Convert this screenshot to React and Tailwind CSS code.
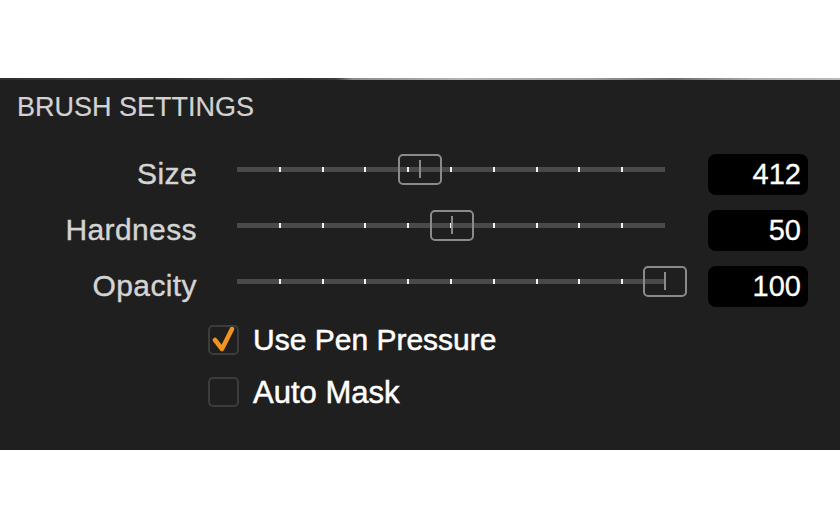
import React from "react";

const TRACK_W = 428;

function Slider({ frac }) {
  const ticks = [1, 2, 3, 4, 5, 6, 7, 8, 9];
  const thumbX = frac * TRACK_W;
  return (
    <div className="relative w-[428px] h-[31px] mb-[10px]">
      <div className="absolute left-0 right-0 top-[13px] h-[5px] bg-[#4a4a4a]" />
      {ticks.map((k) => (
        <div
          key={k}
          className="absolute top-[13px] h-[5px] w-[2px] bg-[#f2f2f2]"
          style={{ left: `${(k * TRACK_W) / 10 - 1}px` }}
        />
      ))}
      <div
        className="absolute top-0 h-[31px] w-[44px] rounded-[5px] border-2 border-[#8a8a8a] flex items-center justify-center"
        style={{ left: `${thumbX - 22}px` }}
      >
        <div className="w-[2px] h-[18px] bg-[#8a8a8a]" />
      </div>
    </div>
  );
}

function Row({ label, frac, value }) {
  return (
    <div className="flex items-center h-[56px]">
      <div className="w-[197px] text-right text-[30px] leading-none tracking-[0.4px] text-[#d4d4d4] [-webkit-text-stroke:0.4px_#d4d4d4]">
        {label}
      </div>
      <div className="ml-[40px]">
        <Slider frac={frac} />
      </div>
      <div className="ml-[43px] w-[100px] h-[41px] rounded-[8px] bg-black flex items-center justify-end pr-[7px] text-[29px] leading-none text-white [-webkit-text-stroke:0.3px_#ffffff]">
        {value}
      </div>
    </div>
  );
}

function Check({ checked, label, size }) {
  return (
    <div className="flex items-center h-[52px] pl-[208px]">
      <div className="w-[31px] h-[30px] rounded-[5px] border-2 border-[#3c3c3c] flex items-center justify-center">
        {checked && (
          <svg width="24" height="26" viewBox="0 0 24 26">
            <polyline
              points="3,13 10,22 20,2"
              fill="none"
              stroke="#f0941f"
              strokeWidth="4.5"
              strokeLinecap="round"
              strokeLinejoin="round"
            />
          </svg>
        )}
      </div>
      <div
        className={
          size === "lg"
            ? "ml-[14px] text-[31px] leading-none text-white [-webkit-text-stroke:0.5px_#ffffff]"
            : "ml-[14px] text-[30px] leading-none text-white [-webkit-text-stroke:0.5px_#ffffff]"
        }
      >
        {label}
      </div>
    </div>
  );
}

export default function App() {
  return (
    <div
      className="w-[840px] h-[530px] bg-white pt-[78px]"
      style={{ fontFamily: '"Liberation Sans", Arial, sans-serif' }}
    >
      <div className="h-[372px] bg-[#1f1f1f]">
        <div className="h-[2px] bg-[linear-gradient(90deg,#2a2e33_0%,#3a3d42_10%,#2c2f33_20%,#4a4c50_28%,#2a2d31_35%,#3a3c40_40%,#8a8c90_42%,#b0b2b6_55%,#9a9ca0_70%,#6a6c70_80%,#a8aaae_90%,#b8babe_100%)]" />
        <div className="h-[66px] pt-[14px] pl-[17px] text-[27px] leading-none text-[#d2d2d2] [-webkit-text-stroke:0.2px_#d2d2d2]">
          BRUSH SETTINGS
        </div>
        <Row label="Size" frac={0.428} value="412" />
        <Row label="Hardness" frac={0.502} value="50" />
        <Row label="Opacity" frac={1} value="100" />
        <Check checked label="Use Pen Pressure" />
        <Check label="Auto Mask" size="lg" />
      </div>
    </div>
  );
}
